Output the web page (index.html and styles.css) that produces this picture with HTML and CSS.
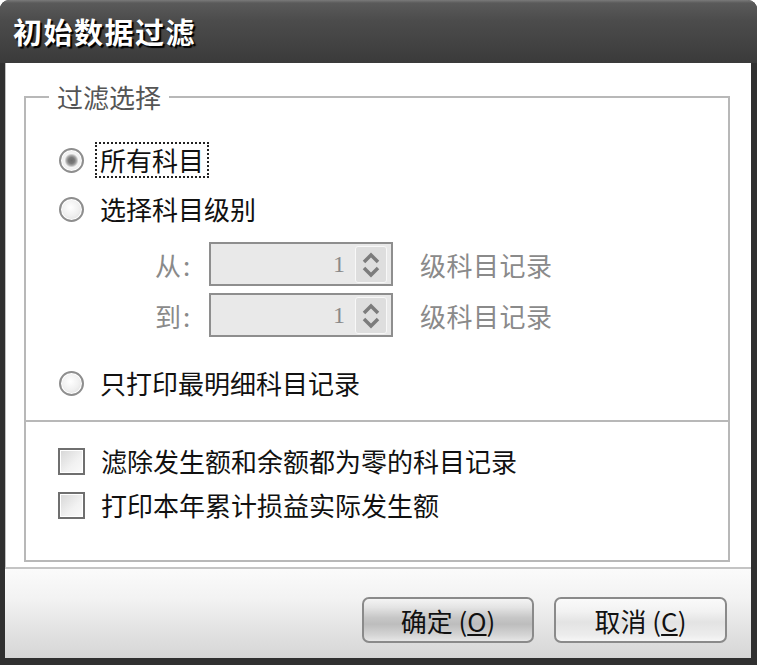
FILE: index.html
```html
<!DOCTYPE html>
<html lang="zh-CN">
<head>
    <meta charset="UTF-8">
    <title>初始数据过滤</title>
    <link rel="stylesheet" href="styles.css">
</head>
<body>
    <div class="window">
        <div class="titlebar">
            <h1>初始数据过滤</h1>
        </div>
        <div class="client">
            <div class="main">
                <fieldset class="group">
                    <legend>过滤选择</legend>

                    <div class="options">
                        <label class="opt opt-first">
                            <span class="radio checked"></span>
                            <span class="focus">所有科目</span>
                        </label>
                        <label class="opt">
                            <span class="radio"></span>
                            <span>选择科目级别</span>
                        </label>

                        <div class="levels">
                            <div class="level-row">
                                <span class="level-label">从:</span>
                                <div class="spin">
                                    <span class="spin-value">1</span>
                                    <span class="spin-btn">
                                        <svg width="30" height="35" viewBox="0 0 30 35">
                                            <path d="M8 15 L15 8 L22 15" fill="none" stroke="#7c7c7c" stroke-width="3.5"/>
                                            <path d="M8 21 L15 28 L22 21" fill="none" stroke="#7c7c7c" stroke-width="3.5"/>
                                        </svg>
                                    </span>
                                </div>
                                <span class="level-unit">级科目记录</span>
                            </div>
                            <div class="level-row">
                                <span class="level-label">到:</span>
                                <div class="spin">
                                    <span class="spin-value">1</span>
                                    <span class="spin-btn">
                                        <svg width="30" height="35" viewBox="0 0 30 35">
                                            <path d="M8 15 L15 8 L22 15" fill="none" stroke="#7c7c7c" stroke-width="3.5"/>
                                            <path d="M8 21 L15 28 L22 21" fill="none" stroke="#7c7c7c" stroke-width="3.5"/>
                                        </svg>
                                    </span>
                                </div>
                                <span class="level-unit">级科目记录</span>
                            </div>
                        </div>

                        <label class="opt opt-last">
                            <span class="radio"></span>
                            <span>只打印最明细科目记录</span>
                        </label>
                    </div>

                    <div class="divider"></div>

                    <div class="checks">
                        <label class="opt">
                            <span class="checkbox"></span>
                            <span>滤除发生额和余额都为零的科目记录</span>
                        </label>
                        <label class="opt">
                            <span class="checkbox"></span>
                            <span>打印本年累计损益实际发生额</span>
                        </label>
                    </div>
                </fieldset>
            </div>

            <div class="footer">
                <button class="btn btn-default">确定 (<u>O</u>)</button>
                <button class="btn">取消 (<u>C</u>)</button>
            </div>
        </div>
    </div>
</body>
</html>
```

FILE: styles.css
```css
/* Dialog window */
body {
    margin: 0;
    background-color: #fff;
    font-family: "Noto Sans CJK SC", "Liberation Sans", sans-serif;
    color: #111;
}

.window {
    width: 757px;
    height: 665px;
    box-sizing: border-box;
    display: flex;
    flex-direction: column;
    padding: 0 6px 7px 5px;
    background-color: #303030;
    border-radius: 9px 9px 0 0;
    overflow: hidden;
}

.titlebar {
    height: 63px;
    margin: 0 -6px 0 -5px;
    padding-left: 13px;
    display: flex;
    align-items: center;
    background: linear-gradient(#7a7a7a 0, #5a5a5a 3px, #4c4c4c 20px, #444 40px, #3a3a3a 100%);
}

.titlebar h1 {
    margin: 0 0 2px 0;
    font-size: 29px;
    font-weight: 700;
    letter-spacing: 1.5px;
    color: #fff;
    text-shadow: 2px 2px 1px #000;
}

.client {
    flex: 1;
    display: flex;
    flex-direction: column;
    background-color: #fff;
    box-shadow: inset 1px 0 0 #c0c0c0;
}

.main {
    flex: 1;
    display: flex;
    flex-direction: column;
    padding: 21px 21px 5px 19px;
}

/* Group box */
.group {
    flex: 1;
    margin: 0;
    padding: 0;
    border: 2px solid #b8b8b8;
    min-width: 0;
}

.group legend {
    margin-left: 23px;
    padding: 0 8px;
    font-size: 26px;
    line-height: 26px;
    color: #555;
}

.options {
    padding: 33px 0 0 33px;
}

.opt {
    height: 34px;
    display: flex;
    align-items: center;
    gap: 16px;
    font-size: 26px;
    line-height: 30px;
}

.opt + .opt {
    margin-top: 15px;
}

.opt-last {
    margin-top: 29px;
}

.focus {
    outline: 2px dotted #222;
    outline-offset: 1px;
    padding: 0 2px;
    margin-left: -2px;
}

.radio {
    width: 25px;
    height: 25px;
    flex-shrink: 0;
    box-sizing: border-box;
    border-radius: 50%;
    border: 2px solid #8e8e8e;
    background: radial-gradient(circle at 45% 40%, #fff 0, #f0f0f0 50%, #d8d8d8 100%);
    box-shadow: inset 0 0 0 1px #fff;
}

.radio.checked {
    background: radial-gradient(circle, #6c6c6c 0, #7a7a7a 3px, #a8a8a8 5px, #f4f4f4 7px, #e6e6e6 100%);
}

.checkbox {
    width: 27px;
    height: 27px;
    flex-shrink: 0;
    box-sizing: border-box;
    border: 2px solid #6f6f6f;
    background: linear-gradient(135deg, #d6d6d6, #f2f2f2 60%, #fafafa);
    box-shadow: inset 0 0 0 1px #fff;
}

/* Level range */
.levels {
    padding: 16px 0 0 96px;
}

.level-row {
    display: flex;
    align-items: center;
    height: 44px;
    color: #8a8a8a;
    font-size: 26px;
}

.level-row + .level-row {
    margin-top: 7px;
}

.level-label {
    width: 54px;
    letter-spacing: 2px;
}

.spin {
    width: 184px;
    height: 44px;
    box-sizing: border-box;
    display: flex;
    align-items: center;
    justify-content: flex-end;
    border: 2px solid #8e8e8e;
    background-color: #e9e9e9;
    padding-right: 4px;
}

.spin-value {
    font-family: "Liberation Serif", serif;
    font-size: 24px;
    color: #8a8a8a;
    margin-right: 10px;
}

.spin-btn {
    width: 30px;
    height: 35px;
    display: flex;
    border: 1px solid #f8f8f8;
    border-radius: 3px;
    background-color: #dedede;
}

.level-unit {
    margin-left: 27px;
    letter-spacing: 0.5px;
}

.divider {
    margin-top: 20px;
    height: 2px;
    background-color: #b8b8b8;
}

.checks {
    padding: 22px 0 0 32px;
}

.checks .opt + .opt {
    margin-top: 10px;
}

/* Button bar */
.footer {
    height: 91px;
    box-sizing: border-box;
    display: flex;
    justify-content: flex-end;
    gap: 20px;
    padding: 28px 24px 0 0;
    border-top: 2px solid #c4c4c4;
    background: linear-gradient(#fbfbfb 0%, #f2f2f2 35%, #e4e4e4 65%, #d6d6d6 100%);
}

.btn {
    width: 173px;
    height: 46px;
    border: 2px solid #8a8a8a;
    border-radius: 7px;
    font-family: "Noto Sans CJK SC", sans-serif;
    font-size: 26px;
    color: #111;
    padding: 0;
    background: linear-gradient(#fafafa 0%, #f2f2f2 30%, #e3e3e3 55%, #ececec 85%, #f6f6f6 100%);
}

.btn-default {
    width: 172px;
    background: linear-gradient(#f4f4f4 0%, #e4e4e4 20%, #c6c6c6 45%, #bdbdbd 60%, #d4d4d4 85%, #e6e6e6 100%);
}
```
